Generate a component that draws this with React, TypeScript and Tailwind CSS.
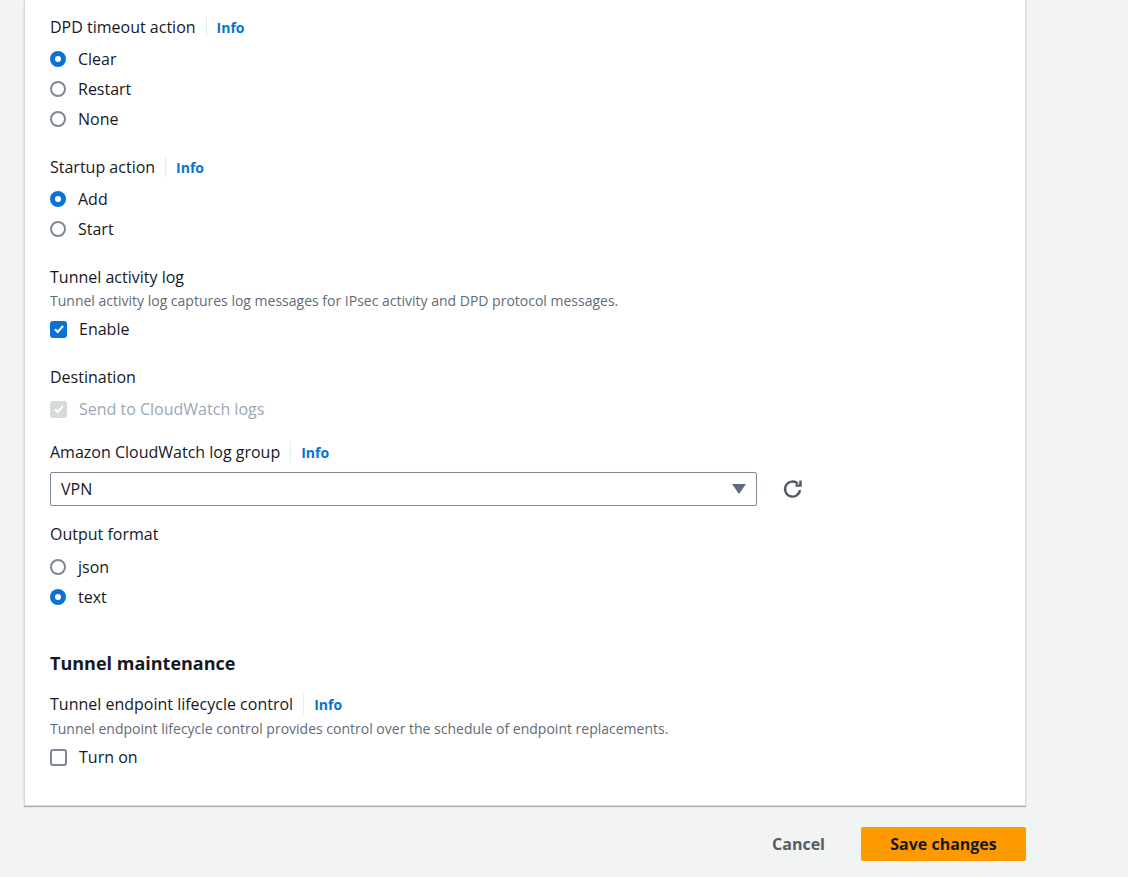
import React from "react";

const Radio = ({ checked, label }: { checked?: boolean; label: string }) => (
  <div className="flex items-center h-[30px] gap-[12px]">
    {checked ? (
      <span className="w-4 h-4 rounded-full bg-[#0972d3] flex items-center justify-center">
        <span className="w-[6px] h-[6px] rounded-full bg-white" />
      </span>
    ) : (
      <span className="w-4 h-4 rounded-full border-2 border-[#7d8998] bg-white" />
    )}
    <span className="text-[16px] text-[#16191f]">{label}</span>
  </div>
);

const Check = ({ checked, disabled, label }: { checked?: boolean; disabled?: boolean; label: string }) => (
  <div className="flex items-center h-[30px] gap-[12px]">
    {checked ? (
      <span className={`w-[17px] h-[17px] rounded-[3px] flex items-center justify-center ${disabled ? "bg-[#d5dbdb]" : "bg-[#0972d3]"}`}>
        <svg width="12" height="12" viewBox="0 0 12 12"><path d="M2 6.2l2.7 2.8L10 3" stroke="white" strokeWidth="2" fill="none" /></svg>
      </span>
    ) : (
      <span className="w-[17px] h-[17px] rounded-[3px] border-2 border-[#7d8998] bg-white" />
    )}
    <span className={`text-[16px] ${disabled ? "text-[#9ba7b6]" : "text-[#16191f]"}`}>{label}</span>
  </div>
);

const Label = ({ text, info, cls = "" }: { text: string; info?: boolean; cls?: string }) => (
  <div className={`flex items-center h-[22px] text-[16px] text-[#16191f] ${cls}`}>
    <span>{text}</span>
    {info && (
      <>
        <span className="mx-[10px] w-px h-[20px] bg-[#e9ebed]" />
        <span className="text-[14px] font-bold text-[#0972d3]">Info</span>
      </>
    )}
  </div>
);

export default function App() {
  return (
    <div className="min-h-[877px] bg-[#f2f3f3] pb-[17px]" style={{ fontFamily: '"Open Sans", sans-serif' }}>
      <div className="ml-[24px] w-[1002px] bg-white border-x border-b border-[#d5dbdb] shadow-[0_1px_1px_rgba(0,28,36,0.3)] px-[25px] pt-[16px] pb-[33px]">
        <Label text="DPD timeout action" info />
        <div className="mt-[6px]">
          <Radio checked label="Clear" />
          <Radio label="Restart" />
          <Radio label="None" />
        </div>
        <Label text="Startup action" info cls="mt-[22px]" />
        <div className="mt-[6px]">
          <Radio checked label="Add" />
          <Radio label="Start" />
        </div>
        <Label text="Tunnel activity log" cls="mt-[22px]" />
        <div className="h-[18px] mt-[3px] text-[14px] text-[#5f6b7a] flex items-center">
          Tunnel activity log captures log messages for IPsec activity and DPD protocol messages.
        </div>
        <div className="mt-[5px]"><Check checked label="Enable" /></div>
        <Label text="Destination" cls="mt-[22px]" />
        <div className="mt-[6px]"><Check checked disabled label="Send to CloudWatch logs" /></div>
        <Label text="Amazon CloudWatch log group" info cls="mt-[17px]" />
        <div className="mt-[9px] flex items-center gap-[24px]">
          <div className="w-[707px] h-[34px] border border-[#7d8998] rounded-[2px] flex items-center justify-between px-[10px]">
            <span className="text-[16px] text-[#16191f]">VPN</span>
            <svg width="14" height="10" viewBox="0 0 14 10"><path d="M0 0h14L7 10z" fill="#5f6b7a" /></svg>
          </div>
          <svg width="24" height="24" viewBox="0 0 24 24" fill="none" stroke="#545b64" strokeWidth="2.4">
            <path d="M19 13a7.5 7.5 0 1 1-2.2-6.3" />
            <path d="M19.5 3.5v5h-5" strokeLinejoin="miter" />
          </svg>
        </div>
        <Label text="Output format" cls="mt-[17px]" />
        <div className="mt-[7px]">
          <Radio label="json" />
          <Radio checked label="text" />
        </div>
        <div className="mt-[39px] h-[24px] flex items-center text-[18px] font-bold text-[#16191f]">Tunnel maintenance</div>
        <Label text="Tunnel endpoint lifecycle control" info cls="mt-[18px]" />
        <div className="h-[18px] mt-[4px] text-[14px] text-[#5f6b7a] flex items-center">
          Tunnel endpoint lifecycle control provides control over the schedule of endpoint replacements.
        </div>
        <div className="mt-[5px]"><Check label="Turn on" /></div>
      </div>
      <div className="w-[1026px] flex justify-end items-center mt-[21px] gap-[36px]">
        <span className="text-[16px] font-bold text-[#545b64]">Cancel</span>
        <button className="w-[165px] h-[34px] rounded-[2px] bg-[#ff9900] text-[16px] font-bold text-[#16191f]">Save changes</button>
      </div>
    </div>
  );
}
